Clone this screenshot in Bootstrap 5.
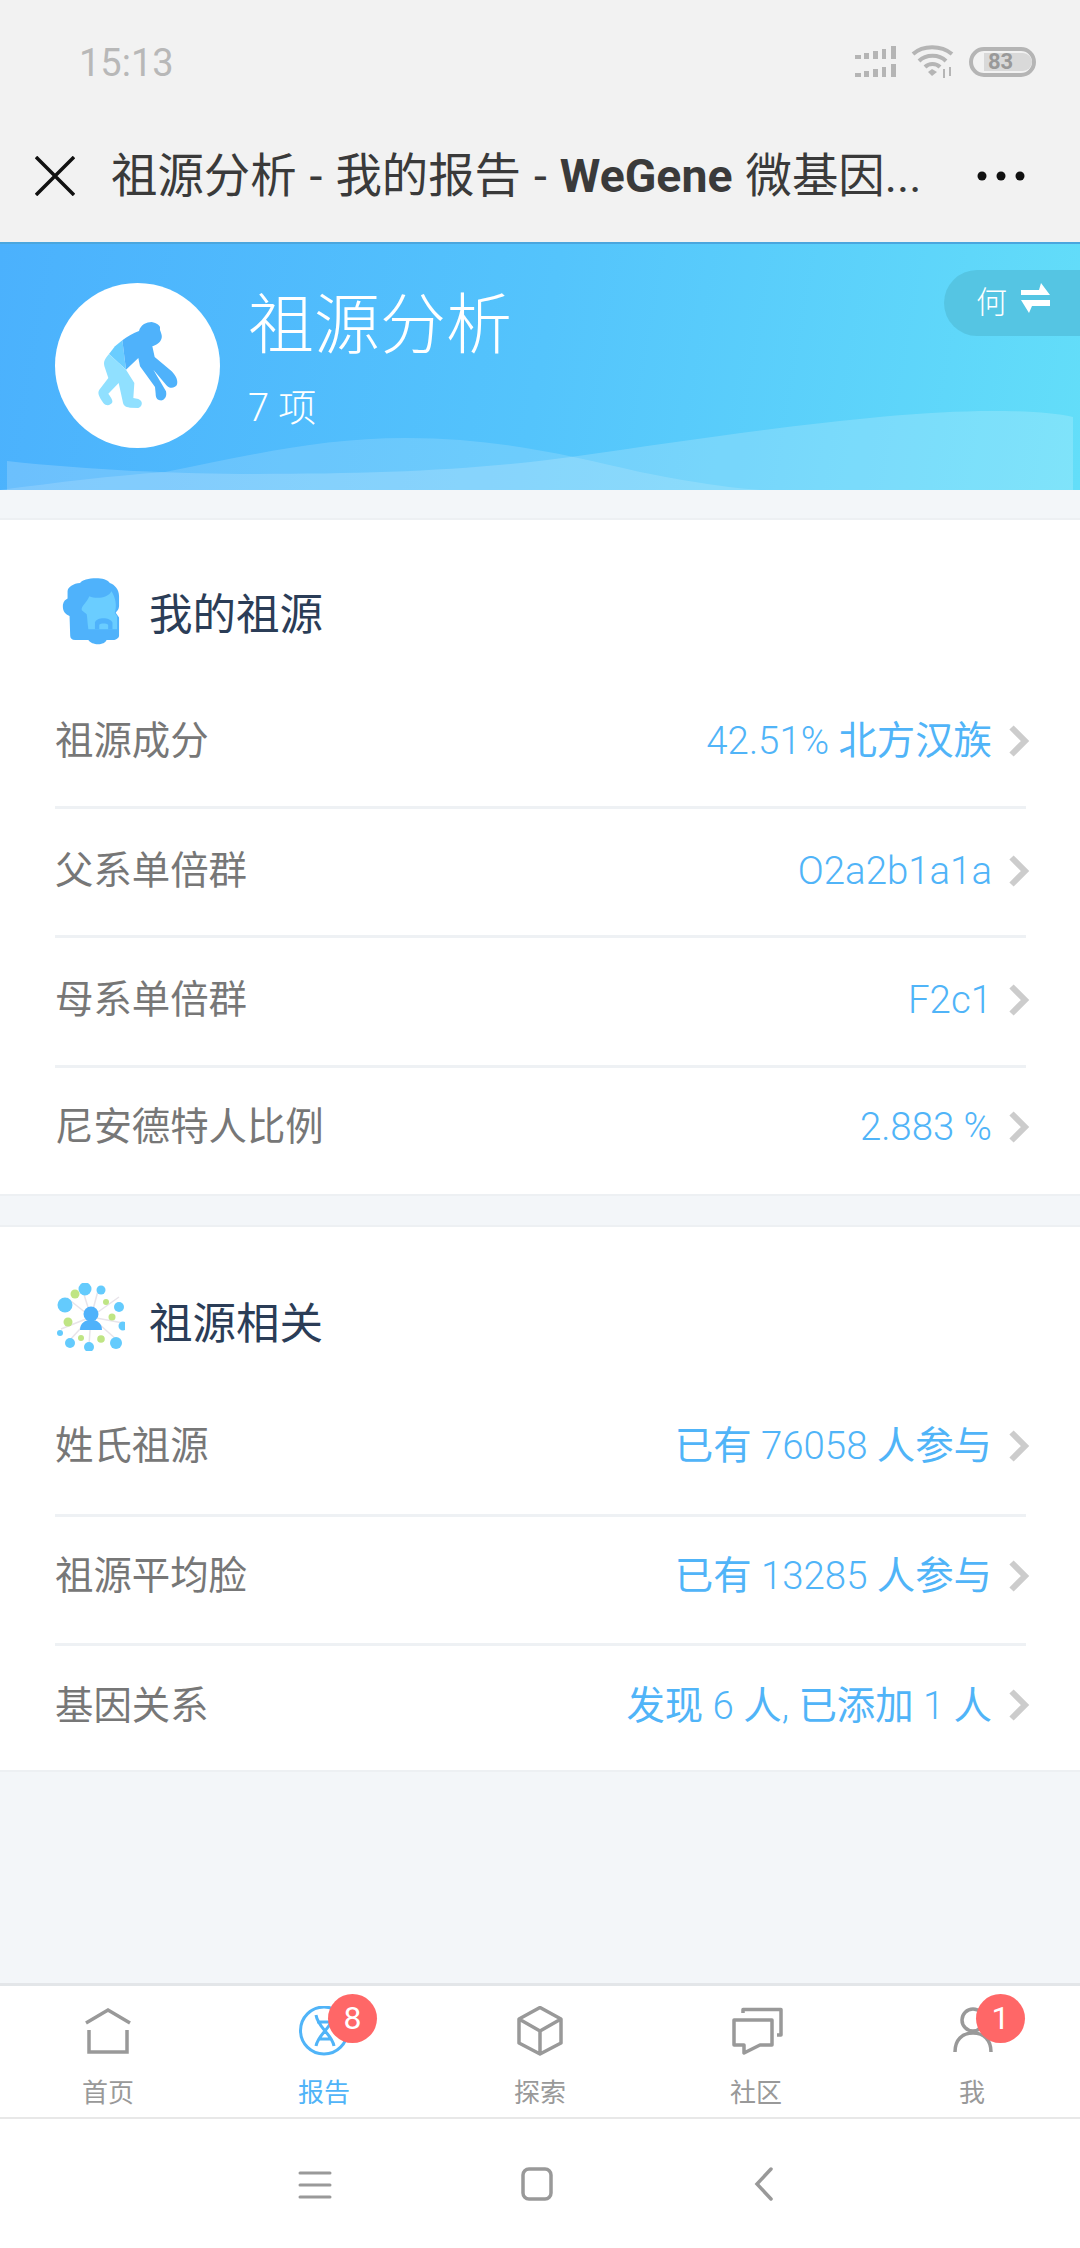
<!DOCTYPE html>
<html lang="zh"><head><meta charset="utf-8">
<link href="https://cdn.jsdelivr.net/npm/bootstrap@5.3.0/dist/css/bootstrap.min.css" rel="stylesheet">
<style>
html,body{margin:0;height:2248px;overflow:hidden}
body{width:1080px;background:#f3f6f9;font-family:Roboto,"Noto Sans CJK SC",sans-serif;display:flex;flex-direction:column}
.topchrome{background:#f2f2f2;height:242px;flex:none}
.statusrow{height:110px;padding:42px 44px 0 79px;color:#b5b5b5}
.clock{font-size:38px;line-height:42px;font-weight:400;color:#b8b8b8}
.stat-icons{margin-top:3px}
.wifiicon{margin-left:14px}
.batt{width:67px;height:30px;border:4px solid #b5b5b5;border-radius:15px;padding:2px;margin-left:14px}
.battfill{display:block;width:48px;height:18px;margin:0 0 0 9px;background:#d9d9d9;border-radius:0 9px 9px 0;color:#999;font-size:22px;line-height:18px;font-weight:700;padding-left:4px}
.titlerow{height:132px;padding:0 54px 0 35px}
.pagetitle{font-size:46.4px;word-spacing:1.5px;line-height:56px;color:#3a3a3a;margin-left:36px;width:824px;white-space:nowrap;overflow:hidden}
.pagetitle b{font-weight:700}
.heroband{height:248px;flex:none;position:relative;background:linear-gradient(100deg,#4bb1fd 0%,#54c4fc 50%,#63def9 100%);border-top:2px solid #4aa6de;overflow:hidden;color:#fff;padding:39px 0 0 55px}
.wavesvg{position:absolute;left:0;bottom:0;width:1080px;height:80px}
.avatar{width:165px;height:165px;background:#fff;border-radius:50%;flex:none;position:relative;z-index:1}
.herotitle{font-size:66px;line-height:76px;font-weight:300}
.herocount{font-size:38px;line-height:44px;font-weight:300;margin-top:22px}
.herotext{margin:5px 0 0 28px;position:relative;z-index:1}
.personpill{position:absolute;right:0;top:26px;width:136px;height:66px;background:#55c5e3;border-radius:33px 0 0 33px;font-size:31px;line-height:66px;padding-left:32px;font-weight:300;z-index:1}
.swapicon{margin:0 0 10px 14px}
.sectioncard{background:#fff;border-top:2px solid #edf0f3;border-bottom:2px solid #edf0f3;padding:0 54px 0 55px;flex:none}
.sect1{margin-top:28px;height:678px}
.sect2{margin-top:29px;height:547px}
.secthead{height:159px;padding-top:36px;padding-bottom:3px}
.sect2 .secthead{height:160px;padding-bottom:0}
.sectlabel{font-size:43.5px;line-height:56px;color:#2b3d57}
.secticon{width:58px;height:68px;margin:0 29px 11px 7px;flex:none}
.sect2 .secticon{width:68px;margin:0 24px 16px 2px}
.datarow{height:129.5px;border-bottom:3px solid #eef1f4;color:#777;font-size:38.4px;font-weight:400}
.sect1 .datarow{padding-bottom:2px}
.sect2 .datarow{padding-bottom:8px}
.sectioncard .datarow:last-child{border-bottom:0;height:119px;padding-bottom:0}
.rowval{color:#50b4f8;font-weight:300}
.cn{font-weight:400}
.rowarrow{width:21px;height:32px;margin:0 -4px 0 17px;flex:none}
.filler{flex:1}
.tabbar{background:#fff;border-top:3px solid #e3e6e9;height:136px;flex:none;border-bottom:2px solid #e8e8e8}
.tabitem{width:216px;position:relative;color:#999;font-size:26px;line-height:30px;text-align:center;padding-top:20px}
.tabitem svg{display:block;margin:0 auto 22px;width:60px;height:50px}
.tabitem.isactive{color:#50b4f8}
.dotcount{position:absolute;top:8px;left:112px;width:49px;height:49px;border-radius:50%;background:#ff6767;color:#fff;font-size:32px;line-height:49px;font-weight:400;text-align:center}
.sysnav{background:#fff;height:129px;flex:none}
.sysnav svg{position:absolute}
</style></head>
<body>
<div class="topchrome">
  <div class="statusrow d-flex justify-content-between align-items-start">
    <div class="clock">15:13</div>
    <div class="d-flex align-items-center stat-icons">
      <svg width="42" height="32" viewBox="0 0 42 32" fill="#b5b5b5"><rect x="0" y="9" width="6" height="4"/><rect x="9" y="7" width="5" height="6"/><rect x="18" y="5" width="5" height="8"/><rect x="27" y="3" width="4" height="10"/><rect x="36" y="0" width="5" height="13"/><rect x="0" y="27" width="6" height="4"/><rect x="9" y="25" width="5" height="6"/><rect x="18" y="23" width="5" height="8"/><rect x="27" y="21" width="4" height="10"/><rect x="36" y="18" width="5" height="13"/></svg>
      <svg class="wifiicon" width="44" height="34" viewBox="0 0 44 34" fill="none" stroke="#b5b5b5" stroke-width="4"><path d="M2 9C12 0 30 0 41 9"/><path d="M8 16C15 9 28 9 35 16"/><path d="M14 22C18 18 25 18 29 22"/><path d="M17 27l4-3 5 3-5 4z" fill="#b5b5b5" stroke="none"/><path d="M33 24v9M39 22v9" stroke-width="2"/></svg>
      <div class="batt"><span class="battfill">83</span></div>
    </div>
  </div>
  <div class="titlerow d-flex align-items-center">
    <svg width="40" height="40" viewBox="0 0 40 40" stroke="#111" stroke-width="3.5" fill="none"><path d="M1 1L39 39M39 1L1 39"/></svg>
    <div class="pagetitle">祖源分析 - 我的报告 - <b>WeGene</b> 微基因...</div>
    <svg class="ms-auto" width="50" height="12" viewBox="0 0 50 12" fill="#111"><circle cx="6" cy="6" r="4.5"/><circle cx="25" cy="6" r="4.5"/><circle cx="44" cy="6" r="4.5"/></svg>
  </div>
</div>

<div class="heroband d-flex align-items-start">
  <svg class="wavesvg" viewBox="0 0 1080 80" preserveAspectRatio="none"><path d="M7 80V51C90 60 180 64 255 64C380 64 480 60 578 46C720 26 880 1 992 1C1030 1 1055 3 1073 7V80Z" fill="#fff" fill-opacity=".18"/><path d="M0 80C60 72 110 66 165 62C250 45 320 28 406 28C500 28 570 46 640 62C690 72 730 78 761 80Z" fill="#fff" fill-opacity=".15"/></svg>
  <div class="avatar">
    <svg width="165" height="165" viewBox="45 40 495 495">
      <path d="M247 212L225 230L207 253L258 300Z" fill="#6acdff"/>
      <path d="M207 253C190 272 190 280 195 295L205 325L178 360C172 370 176 378 190 400C198 410 212 408 217 398C219 390 210 380 205 372L236 340L248 395C250 408 255 412 270 414L295 415C308 410 310 394 295 388L280 385L283 340L258 300Z" fill="#90e0ff"/>
      <path d="M247 212C262 200 280 190 297 184C302 165 320 157 335 157C350 160 362 168 360 176C358 182 368 195 365 205C362 218 350 226 337 230L344 262L395 305C408 318 416 335 410 347C402 358 385 356 378 345L340 300L378 365C382 382 372 394 360 392C350 390 347 382 347 372L345 352L300 290L295 265L258 300Z" fill="#4fb2fb"/>
    </svg>
  </div>
  <div class="herotext">
    <div class="herotitle">祖源分析</div>
    <div class="herocount">7 项</div>
  </div>
  <div class="personpill d-flex align-items-center">何<svg class="swapicon" width="29" height="30" viewBox="0 0 29 30" fill="#fff"><path d="M0 7H18L20 0L29 12H0ZM0 17H29V23H11L8 30Z"/></svg></div>
</div>

<div class="sectioncard sect1">
  <div class="secthead d-flex align-items-center">
    <svg class="secticon" viewBox="97 47 172 206"><path d="M150 65C158 50 225 42 240 65C255 70 268 85 268 105L268 135C268 145 262 150 258 155L268 170V225C268 232 258 238 250 238H230C225 255 185 255 175 238H135C125 238 120 232 120 225L118 165C104 160 96 150 98 130C100 120 106 115 112 112V90C112 78 130 66 150 65Z" fill="#4fb2fb"/><path d="M178 105C200 115 235 110 245 90C258 110 262 135 255 155L262 165V205H175C172 185 172 170 170 160L155 148C152 135 170 125 178 105Z" fill="#6acdff"/><path d="M195 205V185C200 168 240 168 248 185V205H235V192C230 186 212 186 208 192V205Z" fill="#4fb2fb"/></svg>
    <span class="sectlabel">我的祖源</span>
  </div>
  <div class="datarow d-flex align-items-center justify-content-between"><span>祖源成分</span><span class="d-flex align-items-center"><span class="rowval">42.51% <span class="cn">北方汉族</span></span><svg class="rowarrow" viewBox="0 0 21 32"><path d="M2.5 2.5L16 16L2.5 29.5" fill="none" stroke="#ccc" stroke-width="6"/></svg></span></div>
  <div class="datarow d-flex align-items-center justify-content-between"><span>父系单倍群</span><span class="d-flex align-items-center"><span class="rowval">O2a2b1a1a</span><svg class="rowarrow" viewBox="0 0 21 32"><path d="M2.5 2.5L16 16L2.5 29.5" fill="none" stroke="#ccc" stroke-width="6"/></svg></span></div>
  <div class="datarow d-flex align-items-center justify-content-between"><span>母系单倍群</span><span class="d-flex align-items-center"><span class="rowval">F2c1</span><svg class="rowarrow" viewBox="0 0 21 32"><path d="M2.5 2.5L16 16L2.5 29.5" fill="none" stroke="#ccc" stroke-width="6"/></svg></span></div>
  <div class="datarow d-flex align-items-center justify-content-between"><span>尼安德特人比例</span><span class="d-flex align-items-center"><span class="rowval">2.883 %</span><svg class="rowarrow" viewBox="0 0 21 32"><path d="M2.5 2.5L16 16L2.5 29.5" fill="none" stroke="#ccc" stroke-width="6"/></svg></span></div>
</div>

<div class="sectioncard sect2">
  <div class="secthead d-flex align-items-center">
    <svg class="secticon" viewBox="0 0 68 68"><g stroke="#e8e4ea" stroke-width="1.5"><path d="M34 34L25 5M34 34L10 15M34 34L4 46M34 34L12 58M34 34L32 62M34 34L60 57M34 34L66 40M34 34L62 14M34 34L42 4"/></g><g fill="#64cbfd"><circle cx="28" cy="6" r="6.5"/><circle cx="44" cy="7" r="4.5"/><circle cx="8" cy="22" r="7.5"/><circle cx="62" cy="24" r="5"/><circle cx="66" cy="43" r="4.5"/><circle cx="3" cy="50" r="3"/><circle cx="13" cy="60" r="5"/><circle cx="32" cy="64" r="5"/><circle cx="59" cy="60" r="6"/></g><g fill="#bfe584"><circle cx="18" cy="11" r="4.5"/><circle cx="49" cy="19" r="3"/><circle cx="55" cy="34" r="3.5"/><circle cx="11" cy="39" r="4.5"/><circle cx="24" cy="55" r="3"/><circle cx="44" cy="56" r="3.8"/></g><circle cx="34" cy="31" r="7.5" fill="#4fb2fb"/><path d="M23 47C23 40 28 37 34 37C40 37 45 40 45 47Z" fill="#4fb2fb"/></svg>
    <span class="sectlabel">祖源相关</span>
  </div>
  <div class="datarow d-flex align-items-center justify-content-between"><span>姓氏祖源</span><span class="d-flex align-items-center"><span class="rowval"><span class="cn">已有</span> 76058 <span class="cn">人参与</span></span><svg class="rowarrow" viewBox="0 0 21 32"><path d="M2.5 2.5L16 16L2.5 29.5" fill="none" stroke="#ccc" stroke-width="6"/></svg></span></div>
  <div class="datarow d-flex align-items-center justify-content-between"><span>祖源平均脸</span><span class="d-flex align-items-center"><span class="rowval"><span class="cn">已有</span> 13285 <span class="cn">人参与</span></span><svg class="rowarrow" viewBox="0 0 21 32"><path d="M2.5 2.5L16 16L2.5 29.5" fill="none" stroke="#ccc" stroke-width="6"/></svg></span></div>
  <div class="datarow d-flex align-items-center justify-content-between"><span>基因关系</span><span class="d-flex align-items-center"><span class="rowval"><span class="cn">发现</span> 6 <span class="cn">人</span>, <span class="cn">已添加</span> 1 <span class="cn">人</span></span><svg class="rowarrow" viewBox="0 0 21 32"><path d="M2.5 2.5L16 16L2.5 29.5" fill="none" stroke="#ccc" stroke-width="6"/></svg></span></div>
</div>

<div class="filler"></div>

<div class="tabbar d-flex">
  <div class="tabitem"><svg viewBox="0 0 60 50" fill="none" stroke="#999" stroke-width="3.5"><path d="M8 17L30 4L52 17M11 24V46H49V24"/></svg>首页</div>
  <div class="tabitem isactive"><svg viewBox="0 0 60 50" fill="none" stroke="#50b4f8" stroke-width="3"><circle cx="30" cy="24.5" r="23.5"/><path d="M22 9C24 22 38 28 40 40M40 9C38 22 24 28 22 40M23 16H38M24 33H37"/></svg>报告<span class="dotcount">8</span></div>
  <div class="tabitem"><svg viewBox="0 0 60 50" fill="none" stroke="#999" stroke-width="3.5" stroke-linejoin="round"><path d="M30 1.5L51 13V37L30 48L9 37V13ZM9 13L30 25L51 13M30 25V48"/></svg>探索</div>
  <div class="tabitem"><svg viewBox="0 0 60 50" fill="none" stroke="#999" stroke-width="3.5" stroke-linejoin="round"><path d="M17 7V3.5H55V29H51"/><path d="M8 14H46V39H34L18 47V39H8Z"/></svg>社区</div>
  <div class="tabitem"><svg viewBox="0 0 60 50" fill="none" stroke="#999" stroke-width="3.5"><circle cx="31" cy="14" r="11"/><path d="M13 46C13 34 20 27 31 27C42 27 49 34 49 46"/></svg>我<span class="dotcount">1</span></div>
</div>

<div class="sysnav position-relative">
  <svg style="left:298px;top:51px" width="34" height="30" viewBox="0 0 34 30" stroke="#999" stroke-width="3" stroke-linecap="round"><path d="M2 3H32M2 15H32M2 27H32"/></svg>
  <svg style="left:521px;top:48px" width="32" height="34" viewBox="0 0 32 34" fill="none" stroke="#999" stroke-width="3.5"><rect x="2" y="2" width="28" height="30" rx="6"/></svg>
  <svg style="left:754px;top:48px" width="20" height="34" viewBox="0 0 20 34" fill="none" stroke="#999" stroke-width="3.5" stroke-linecap="round"><path d="M17 2L3 17L17 32"/></svg>
</div>
</body></html>
